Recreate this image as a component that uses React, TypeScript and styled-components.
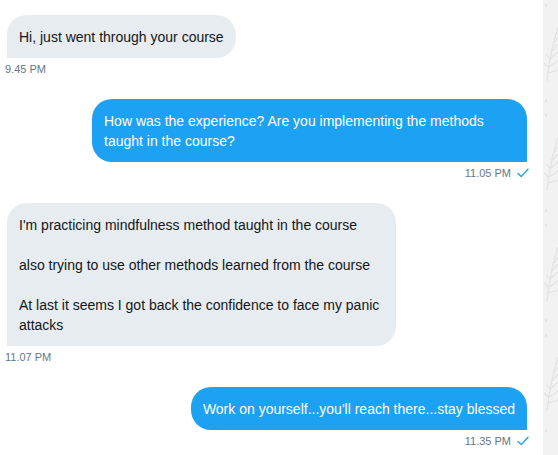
import styled, { createGlobalStyle } from "styled-components";

const GlobalStyle = createGlobalStyle`
    html, body {
        margin: 0;
        padding: 0;
        background: #ffffff;
        font-family: "Liberation Sans", Arial, sans-serif;
    }
`;

type Side = "in" | "out";

interface Message {
    id: number;
    side: Side;
    time: string;
    lines: string[];
}

const messages: Message[] = [
    { id: 1, side: "in", time: "9.45 PM", lines: ["Hi, just went through your course"] },
    {
        id: 2,
        side: "out",
        time: "11.05 PM",
        lines: ["How was the experience? Are you implementing the methods taught in the course?"],
    },
    {
        id: 3,
        side: "in",
        time: "11.07 PM",
        lines: [
            "I'm practicing mindfulness method taught in the course",
            "also trying to use other methods learned from the course",
            "At last it seems I got back the confidence to face my panic attacks",
        ],
    },
    {
        id: 4,
        side: "out",
        time: "11.35 PM",
        lines: ["Work on yourself...you'll reach there...stay blessed"],
    },
];

const Leaf = () => (
    <svg width="15" height="60" viewBox="0 0 15 60" fill="none" stroke="#e2e2e2" strokeWidth="1.2">
        <path d="M4 58 C6 40 9 22 15 4" />
        <path d="M6 44 L15 38" />
        <path d="M7 36 L15 29" />
        <path d="M9 28 L15 21" />
        <path d="M11 20 L15 14" />
        <path d="M5 50 L15 47" />
        <path d="M5 44 L1 40" />
        <path d="M7 36 L3 31" />
    </svg>
);

export default function App() {
    return (
        <>
            <GlobalStyle />
            <Page>
                <Chat>
                    {messages.map((m) => (
                        <Group key={m.id} side={m.side}>
                            <Bubble side={m.side}>
                                {m.lines.map((l, i) => (
                                    <Para key={i}>{l}</Para>
                                ))}
                            </Bubble>
                            <Meta side={m.side}>
                                <span>{m.time}</span>
                                {m.side === "out" && (
                                    <svg width="12" height="10" viewBox="0 0 12 10" fill="none">
                                        <path
                                            d="M1 5.5 L4.2 8.6 L11 1.2"
                                            stroke="#1da1f2"
                                            strokeWidth="1.4"
                                            strokeLinecap="round"
                                            strokeLinejoin="round"
                                        />
                                    </svg>
                                )}
                            </Meta>
                        </Group>
                    ))}
                </Chat>
                <Strip>
                    {[0, 1, 2, 3].map((i) => (
                        <LeafSlot key={i}>
                            <Dot />
                            <Leaf />
                            <Dot />
                        </LeafSlot>
                    ))}
                </Strip>
            </Page>
        </>
    );
}

const Page = styled.div`
    display: flex;
    width: 558px;
    height: 455px;
    overflow: hidden;
`;

const Chat = styled.div`
    flex: 1;
    display: flex;
    flex-direction: column;
    gap: 22px;
    padding: 15px 16px 0 7px;
`;

const Group = styled.div<{ side: Side }>`
    display: flex;
    flex-direction: column;
    align-items: ${(p) => (p.side === "out" ? "flex-end" : "flex-start")};
`;

const Bubble = styled.div<{ side: Side }>`
    box-sizing: border-box;
    max-width: ${(p) => (p.side === "out" ? "435px" : "389px")};
    padding: 12px 12px 11px;
    font-size: 14px;
    line-height: 20px;
    color: ${(p) => (p.side === "out" ? "#ffffff" : "#14171a")};
    background: ${(p) => (p.side === "out" ? "#1da1f2" : "#e6ecf0")};
    border-radius: ${(p) => (p.side === "out" ? "20px 20px 0 20px" : "20px 20px 20px 0")};
`;

const Para = styled.p`
    margin: 0;
    & + & {
        margin-top: 20px;
    }
`;

const Meta = styled.div<{ side: Side }>`
    display: flex;
    align-items: center;
    gap: 6px;
    margin-top: 3px;
    margin-left: ${(p) => (p.side === "in" ? "-2px" : "0")};
    margin-right: ${(p) => (p.side === "out" ? "-2px" : "0")};
    font-size: 11px;
    line-height: 16px;
    color: #657786;
`;

const Strip = styled.div`
    width: 15px;
    flex-shrink: 0;
    background: #f2f2f2;
    display: flex;
    flex-direction: column;
    padding-top: 0;
`;

const LeafSlot = styled.div`
    height: 110px;
    display: flex;
    flex-direction: column;
    justify-content: space-between;
    padding: 4px 0 8px;
    box-sizing: border-box;
`;

const Dot = styled.div`
    width: 2px;
    height: 3px;
    margin-left: 2px;
    background: #e4e4e4;
`;
